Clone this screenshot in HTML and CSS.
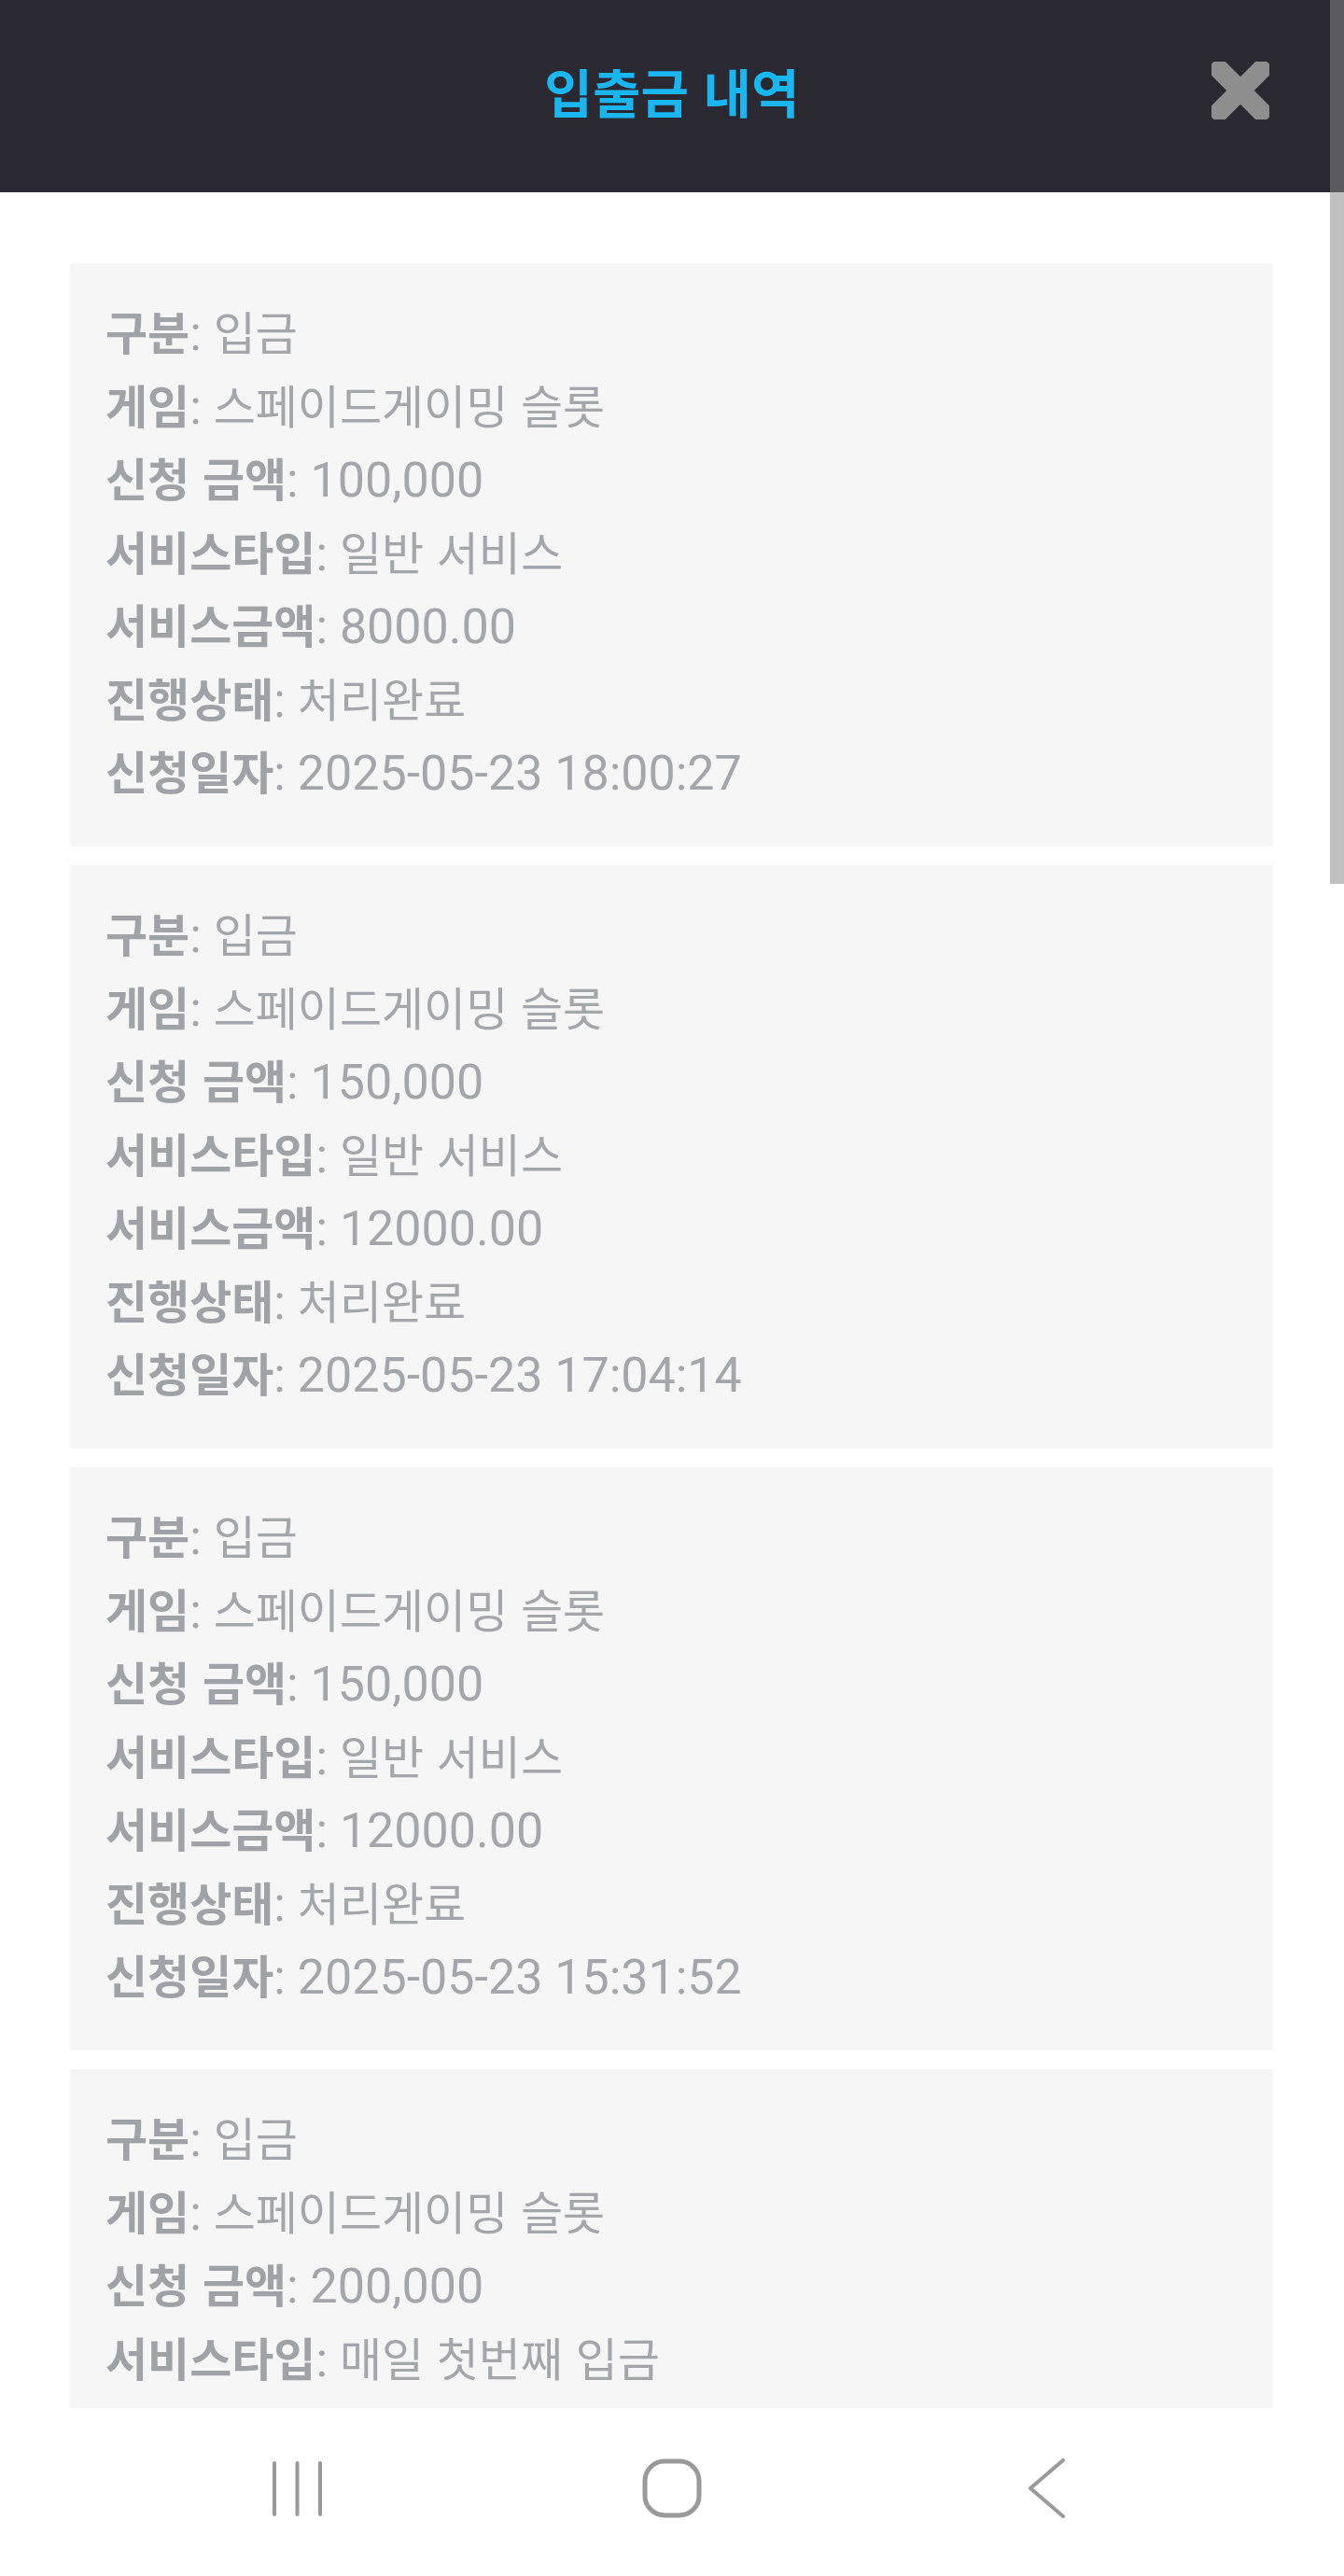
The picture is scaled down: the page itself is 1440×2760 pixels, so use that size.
FILE: index.html
```html
<!DOCTYPE html>
<html lang="ko">
<head>
<meta charset="utf-8">
<title>입출금 내역</title>
<link rel="stylesheet" href="styles.css">
</head>
<body>
<div class="screen">
  <header class="topbar">
    <div class="spacer"></div>
    <h1 class="title">입출금 내역</h1>
    <div class="close-wrap">
      <svg class="close" width="62" height="62" viewBox="0 0 62 62" aria-label="닫기">
        <rect x="-11" y="20.5" width="84" height="21" rx="5" transform="rotate(45 31 31)" fill="#8e8e8e"/>
        <rect x="-11" y="20.5" width="84" height="21" rx="5" transform="rotate(-45 31 31)" fill="#8e8e8e"/>
      </svg>
    </div>
  </header>

  <main class="list">
    <section class="card">
      <div class="row"><b class="label">구분</b>: <span class="ko">입금</span></div>
      <div class="row"><b class="label">게임</b>: <span class="ko">스페이드게이밍 슬롯</span></div>
      <div class="row"><b class="label">신청 금액</b>: 100,000</div>
      <div class="row"><b class="label">서비스타입</b>: <span class="ko">일반 서비스</span></div>
      <div class="row"><b class="label">서비스금액</b>: 8000.00</div>
      <div class="row"><b class="label">진행상태</b>: <span class="ko">처리완료</span></div>
      <div class="row"><b class="label">신청일자</b>: 2025-05-23 18:00:27</div>
    </section>
    <section class="card">
      <div class="row"><b class="label">구분</b>: <span class="ko">입금</span></div>
      <div class="row"><b class="label">게임</b>: <span class="ko">스페이드게이밍 슬롯</span></div>
      <div class="row"><b class="label">신청 금액</b>: 150,000</div>
      <div class="row"><b class="label">서비스타입</b>: <span class="ko">일반 서비스</span></div>
      <div class="row"><b class="label">서비스금액</b>: 12000.00</div>
      <div class="row"><b class="label">진행상태</b>: <span class="ko">처리완료</span></div>
      <div class="row"><b class="label">신청일자</b>: 2025-05-23 17:04:14</div>
    </section>
    <section class="card">
      <div class="row"><b class="label">구분</b>: <span class="ko">입금</span></div>
      <div class="row"><b class="label">게임</b>: <span class="ko">스페이드게이밍 슬롯</span></div>
      <div class="row"><b class="label">신청 금액</b>: 150,000</div>
      <div class="row"><b class="label">서비스타입</b>: <span class="ko">일반 서비스</span></div>
      <div class="row"><b class="label">서비스금액</b>: 12000.00</div>
      <div class="row"><b class="label">진행상태</b>: <span class="ko">처리완료</span></div>
      <div class="row"><b class="label">신청일자</b>: 2025-05-23 15:31:52</div>
    </section>
    <section class="card card-partial">
      <div class="row"><b class="label">구분</b>: <span class="ko">입금</span></div>
      <div class="row"><b class="label">게임</b>: <span class="ko">스페이드게이밍 슬롯</span></div>
      <div class="row"><b class="label">신청 금액</b>: 200,000</div>
      <div class="row"><b class="label">서비스타입</b>: <span class="ko">매일 첫번째 입금</span></div>
    </section>
  </main>

  <nav class="navbar">
    <div class="nav-slot">
      <svg width="61" height="61" viewBox="0 0 61 61" aria-label="최근 앱">
        <g stroke="#9a9a9a" stroke-width="4" stroke-linecap="round">
          <line x1="6" y1="3" x2="6" y2="58"/>
          <line x1="30.5" y1="3" x2="30.5" y2="58"/>
          <line x1="55" y1="3" x2="55" y2="58"/>
        </g>
      </svg>
    </div>
    <div class="nav-slot">
      <svg width="64" height="64" viewBox="0 0 64 64" aria-label="홈">
        <rect x="3" y="3" width="58" height="58" rx="21" fill="none" stroke="#9a9a9a" stroke-width="5"/>
      </svg>
    </div>
    <div class="nav-slot">
      <svg width="44" height="64" viewBox="0 0 44 64" aria-label="뒤로">
        <polyline points="39,2 4,32 39,62" fill="none" stroke="#9a9a9a" stroke-width="4" stroke-linecap="round" stroke-linejoin="round"/>
      </svg>
    </div>
  </nav>

  <div class="scroll-thumb"></div>
</div>
</body>
</html>
```

FILE: styles.css
```css
html, body {
  margin: 0;
  padding: 0;
  background: #ffffff;
}

.screen {
  position: relative;
  width: 1440px;
  height: 2760px;
  overflow: hidden;
  display: flex;
  flex-direction: column;
  font-family: "Roboto", "Noto Sans CJK KR", sans-serif;
}

.topbar {
  flex: 0 0 206px;
  box-sizing: border-box;
  padding-bottom: 12px;
  background: #2a2931;
  display: grid;
  grid-template-columns: 1fr auto 1fr;
  align-items: center;
}

.title {
  margin: 0;
  font-family: "Noto Sans CJK KR", sans-serif;
  font-weight: 700;
  font-size: 56px;
  line-height: 1;
  color: #19b6f2;
}

.close-wrap {
  display: flex;
  justify-content: flex-end;
  padding-right: 80px;
}

.close {
  display: block;
}

.list {
  flex: 0 0 2374px;
  box-sizing: border-box;
  overflow: hidden;
  padding: 76px 76px 0 75px;
  display: flex;
  flex-direction: column;
  gap: 20px;
}

.card {
  flex: 0 0 auto;
  background: #f6f6f6;
  padding: 37px 38px 38.5px;
}

.card-partial {
  padding-bottom: 80px;
}

.row {
  height: 78.5px;
  line-height: 78.5px;
  font-size: 52px;
  color: #a3a6ab;
  white-space: nowrap;
}

.label {
  font-family: "Noto Sans CJK KR", sans-serif;
  font-weight: 700;
  font-size: 49px;
  line-height: 1;
  color: #9fa2a7;
}

.ko {
  font-family: "Noto Sans CJK KR", sans-serif;
  font-weight: 400;
  font-size: 49px;
  line-height: 1;
}

.navbar {
  flex: 0 0 180px;
  background: #ffffff;
  display: grid;
  grid-template-columns: repeat(3, 402px);
  justify-content: center;
  align-items: center;
  padding-bottom: 8px;
  box-sizing: border-box;
}

.nav-slot {
  display: flex;
  justify-content: center;
  align-items: center;
}

.nav-slot svg {
  display: block;
}

.scroll-thumb {
  position: absolute;
  top: 0;
  right: 0;
  width: 15px;
  height: 947px;
  background: rgba(136, 136, 136, 0.52);
}
```
